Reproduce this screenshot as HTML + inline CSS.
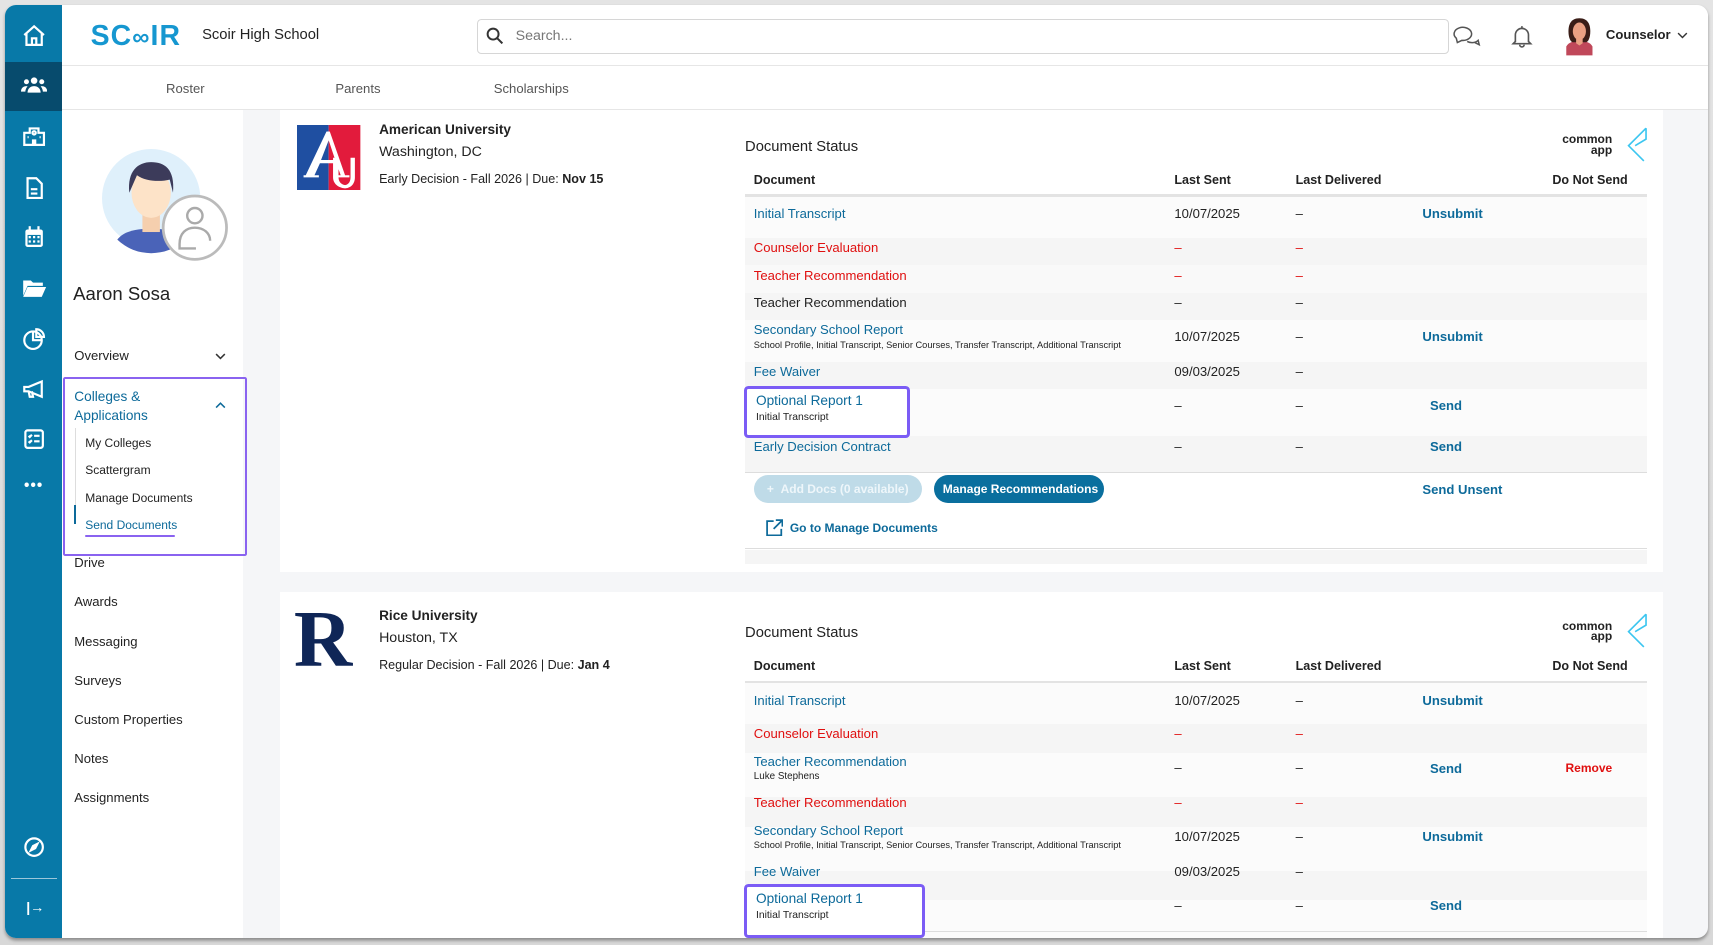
<!DOCTYPE html>
<html><head><meta charset="utf-8">
<style>
*{box-sizing:border-box;margin:0;padding:0}
html,body{width:1713px;height:945px;overflow:hidden;background:#dcdcdc}
#w{position:absolute;left:0;top:0;width:1568px;height:865px;zoom:1.09247;font-family:"Liberation Sans",sans-serif;color:#222;font-size:12px;background:linear-gradient(#e4e4e4,#d8d8d8)}
.a{position:absolute;white-space:nowrap}
#win{position:absolute;left:5px;top:5px;width:1558px;height:854px;background:#f5f6f8;border-radius:10px;overflow:hidden;box-shadow:0 2px 3px rgba(0,0,0,.35)}
.rail{left:0;top:0;width:52px;height:854px;background:#0879a8}
.ic{position:absolute;left:14px;width:24px;height:24px}
.blue{color:#0d6a9a}
.red{color:#e01010}
.card{background:#fff}
.row{position:absolute;left:0;width:826px}
.b{font-weight:bold}
.hl{position:absolute;border:3px solid #7b5cf5;border-radius:4px;background:#fff}
.tb .a:not(.nt){margin-top:-4px}
</style></head><body>
<div id="w">
<div id="win">
 <div class="a rail"></div>
 <div class="a" style="left:0;top:52px;width:52px;height:45px;background:#074b6d"></div>
 <svg class="ic" style="top:16px" viewBox="0 0 24 24" fill="none" stroke="#fff" stroke-width="2"><path d="M3 11L12 3l9 8M5 9v11h14V9M10 20v-6h4v6"/></svg>
 <svg class="ic" style="top:62px" viewBox="0 0 24 24" fill="#fff"><circle cx="12" cy="7" r="3"/><circle cx="5" cy="8" r="2.3"/><circle cx="19" cy="8" r="2.3"/><path d="M6 18c0-4 3-6 6-6s6 2 6 6zM0 17c0-3 2-5 5-5l1 .3C4.5 14 4 16 4 17zM24 17c0-3-2-5-5-5l-1 .3c1.5 1.700 2 3.7 2 4.7z"/></svg>
 <svg class="ic" style="top:108px" viewBox="0 0 24 24" fill="none" stroke="#fff" stroke-width="2"><path d="M3 20V9h5V5h8v4h5v11zM11 20v-4h2v4M6 13h1M17 13h1"/><circle cx="12" cy="9" r="1.5"/></svg>
 <svg class="ic" style="top:155px" viewBox="0 0 24 24" fill="none" stroke="#fff" stroke-width="2"><path d="M6 3h8l5 5v13H6zM9 13h6M9 17h6"/></svg>
 <svg class="ic" style="top:200px" viewBox="0 0 24 24" fill="#fff"><rect x="4" y="5" width="16" height="16" rx="2"/><rect x="7" y="2" width="2" height="4"/><rect x="15" y="2" width="2" height="4"/><path d="M6 10h12v9H6z" fill="#0879a8"/><path d="M7 11h2v2H7zM11 11h2v2h-2zM15 11h2v2h-2zM7 15h2v2H7zM11 15h2v2h-2zM15 15h2v2h-2z"/></svg>
 <svg class="ic" style="top:247px" viewBox="0 0 24 24" fill="#fff"><path d="M2 5h7l2 2h9v3H6l-4 9zM6 11h17l-4 9H2z"/></svg>
 <svg class="ic" style="top:293px" viewBox="0 0 24 24" fill="none" stroke="#fff" stroke-width="2"><circle cx="11" cy="13" r="8"/><path d="M11 5v8h8M14 3a7 7 0 0 1 7 7h-7z" /></svg>
 <svg class="ic" style="top:339px" viewBox="0 0 24 24" fill="none" stroke="#fff" stroke-width="2"><path d="M3 10h4l12-5v14L7 14H3zM7 14l1 5h3l-1-5"/></svg>
 <svg class="ic" style="top:385px" viewBox="0 0 24 24" fill="none" stroke="#fff" stroke-width="2"><rect x="4" y="4" width="16" height="16" rx="2"/><path d="M7 9l1 1 2-2M12 9h5M7 14l1 1 2-2M12 14h5"/></svg>
 <div class="a" style="left:17px;top:432px;color:#fff;font-size:14px;font-weight:bold;letter-spacing:1px">•••</div>
 <svg class="ic" style="top:758px" viewBox="0 0 24 24" fill="none" stroke="#fff" stroke-width="2"><circle cx="12" cy="12" r="8"/><path d="M15 9l-2 4-4 2 2-4z" fill="#fff"/></svg>
 <div class="a" style="left:5px;top:799px;width:42px;height:1px;background:#9cc7da"></div>
 <div class="a" style="left:19px;top:819px;color:#fff;font-size:13px;font-weight:bold">|→</div>

 <div class="a" style="left:52px;top:0;width:1506px;height:55px;background:#fff;border-bottom:1px solid #e6e6e6"></div>
 <div class="a" style="left:78px;top:13px;font-size:26px;font-weight:bold;color:#1697d0;letter-spacing:1px">SC<span style="font-size:22px">∞</span>IR</div>
 <div class="a" style="left:180px;top:20px;font-size:13.5px">Scoir High School</div>
 <div class="a" style="left:432px;top:12px;width:889px;height:32px;border:1px solid #d6d6d6;border-radius:4px;background:#fff"></div>
 <svg class="a" style="left:440px;top:20px" width="16" height="16" viewBox="0 0 16 16" fill="none" stroke="#333" stroke-width="1.8"><circle cx="6.5" cy="6.5" r="5"/><path d="M10 10l5 5"/></svg>
 <div class="a" style="left:467px;top:21px;font-size:13px;color:#777">Search...</div>
 <svg class="a" style="left:1325px;top:17px" width="26" height="22" viewBox="0 0 26 22" fill="none" stroke="#555" stroke-width="1.4"><path d="M3 13 a8 6 0 1 1 5 2l-4 2z"/><path d="M13 16a7 5 0 0 0 10 -1l1 4-4-2"/></svg>
 <svg class="a" style="left:1378px;top:17px" width="20" height="22" viewBox="0 0 20 22" fill="none" stroke="#555" stroke-width="1.5"><path d="M4 16V10a6 6 0 0 1 12 0v6l2 2H2zM8 19a2 2 0 0 0 4 0M10 2v2"/></svg>
 <svg class="a" style="left:1426px;top:10px" width="30" height="36" viewBox="0 0 30 36"><path d="M3 28c2-4 6-5 12-5s10 1 12 5v8H3z" fill="#c0485a"/><path d="M15 2c-8 0-10 6-10 12s2 10 4 10h12c2 0 4-4 4-10S23 2 15 2z" fill="#3a1d17"/><ellipse cx="15" cy="14" rx="6" ry="8" fill="#eaa083"/><path d="M12 21h6v4l-3 2-3-2z" fill="#eaa083"/></svg>
 <div class="a" style="left:1465px;top:20px;font-size:12px;font-weight:bold">Counselor</div>
 <svg class="a" style="left:1530px;top:24px" width="10" height="7" viewBox="0 0 10 7" fill="none" stroke="#333" stroke-width="1.3"><path d="M1 1l4 4 4-4"/></svg>

 <div class="a" style="left:52px;top:55px;width:1506px;height:41px;background:#fff;border-bottom:1px solid #e6e6e6"></div>
 <div class="a" style="left:147px;top:69px;color:#555">Roster</div>
 <div class="a" style="left:302px;top:69px;color:#555">Parents</div>
 <div class="a" style="left:447px;top:69px;color:#555">Scholarships</div>

 <div class="a" style="left:52px;top:96px;width:165px;height:758px;background:#fff"></div>
 <svg class="a" style="left:88px;top:131px" width="118" height="105" viewBox="0 0 118 105"><circle cx="45" cy="45" r="45" fill="#dff0fb"/><path d="M14 83c6-8 18-10 31-10s25 2 31 10a45 45 0 0 1-62 0z" fill="#4a63b8"/><rect x="37" y="58" width="16" height="18" fill="#f5cfae"/><ellipse cx="45" cy="40" rx="18" ry="23" fill="#fde3c8"/><path d="M25 40c-2-20 8-28 20-28s22 6 20 28l-3-12c-8 2-22 2-30-4z" fill="#3c3b5a"/><circle cx="85" cy="72" r="29" fill="#fff" stroke="#bbb" stroke-width="2.5"/><circle cx="85" cy="61" r="7" fill="none" stroke="#aaa" stroke-width="2.2"/><path d="M71 87c0-10 6-15 14-15s14 5 14 12" fill="none" stroke="#aaa" stroke-width="2.2"/><path d="M71 87v4h15" fill="none" stroke="#aaa" stroke-width="2.2"/></svg>
 <div class="a" style="left:62px;top:254px;font-size:17px">Aaron Sosa</div>
 <div class="a" style="left:63px;top:314px">Overview</div>
 <svg class="a" style="left:192px;top:318px" width="10" height="7" viewBox="0 0 10 7" fill="none" stroke="#333" stroke-width="1.4"><path d="M1 1l4 4 4-4"/></svg>
 <div class="a" style="left:53px;top:340px;width:168px;height:164px;border:2px solid #8a63f0;border-radius:2px"></div>
 <div class="a blue" style="left:63px;top:349px;font-size:12.5px;line-height:18px">Colleges &amp;<br>Applications</div>
 <svg class="a" style="left:192px;top:362px" width="10" height="7" viewBox="0 0 10 7" fill="none" stroke="#0d6a9a" stroke-width="1.4"><path d="M1 6l4-4 4 4"/></svg>
 <div class="a" style="left:64px;top:387px;width:1px;height:88px;background:#ddd"></div>
 <div class="a" style="left:63px;top:457px;width:2px;height:18px;background:#0d6a9a"></div>
 <div class="a" style="left:73px;top:394px;font-size:11px">My Colleges</div>
 <div class="a" style="left:73px;top:419px;font-size:11px">Scattergram</div>
 <div class="a" style="left:73px;top:444px;font-size:11px">Manage Documents</div>
 <div class="a blue" style="left:73px;top:469px;font-size:11px">Send Documents</div>
 <div class="a" style="left:73px;top:485px;width:82px;height:2px;background:#8a63f0;border-radius:1px"></div>
 <div class="a" style="left:63px;top:503px">Drive</div>
 <div class="a" style="left:63px;top:539px">Awards</div>
 <div class="a" style="left:63px;top:575px">Messaging</div>
 <div class="a" style="left:63px;top:611px">Surveys</div>
 <div class="a" style="left:63px;top:647px">Custom Properties</div>
 <div class="a" style="left:63px;top:682px">Notes</div>
 <div class="a" style="left:63px;top:718px">Assignments</div>

 <div class="a card" style="left:251px;top:96px;width:1266px;height:423px"></div>
 <svg class="a" style="left:267px;top:109px" width="58" height="60" viewBox="0 0 58 60"><rect width="29" height="60" fill="#1f4fa1"/><rect x="29" width="29" height="60" fill="#e21b3c"/><path d="M8 46L27 6h3l14 40h4v2H36v-2h4l-4-11H21l-5 11h4v2H6v-2z M22 32h13L29 14z" fill="#fff"/><path d="M33 30h5v18c0 5 4 7 6 7s5-2 5-7V30h4v18c0 7-5 10-9 10s-11-3-11-10z" fill="#fff"/></svg>
 <div class="a b" style="left:342px;top:107px;font-size:12.5px">American University</div>
 <div class="a" style="left:342px;top:127px;font-size:13px">Washington, DC</div>
 <div class="a" style="left:342px;top:152px;font-size:11.5px">Early Decision - Fall 2026 | Due: <b>Nov 15</b></div>

 <div class="a tb" style="left:677px;top:96px;width:826px;height:411px">
  <div class="a nt" style="left:0;top:26px;font-size:13.5px">Document Status</div>
  <div class="a b nt" style="left:748px;top:22px;font-size:11px;line-height:10px;text-align:right">common<br>app</div>
  <svg class="a" style="left:803px;top:18px" width="24" height="34" viewBox="0 0 24 34" fill="none" stroke="#3cc6f0" stroke-width="1.5"><path d="M22 2L6 18l14 14M22 2v10L12 18"/></svg>
  <div class="a b" style="left:8px;top:61px;font-size:11.5px">Document</div>
  <div class="a b" style="left:393px;top:61px;font-size:11.5px">Last Sent</div>
  <div class="a b" style="left:504px;top:61px;font-size:11.5px">Last Delivered</div>
  <div class="a b" style="left:739px;top:61px;font-size:11.5px">Do Not Send</div>
  <div class="a nt" style="left:0;top:77px;width:826px;height:2px;background:#e3e3e3"></div>
  <div class="row" style="top:79px;height:38px;background:#fbfbfb"></div>
  <div class="row" style="top:117px;height:25px;background:#f5f5f5"></div>
  <div class="row" style="top:142px;height:25px;background:#f9f9f9"></div>
  <div class="row" style="top:167px;height:25px;background:#f5f5f5"></div>
  <div class="row" style="top:192px;height:38px;background:#fbfbfb"></div>
  <div class="row" style="top:230px;height:25px;background:#f5f5f5"></div>
  <div class="row" style="top:255px;height:43px;background:#fbfbfb"></div>
  <div class="row" style="top:298px;height:33px;background:#f5f5f5"></div>
  <div class="a nt" style="left:0;top:331px;width:826px;height:1px;background:#ddd"></div>
  <div class="a nt" style="left:0;top:401px;width:826px;height:1px;background:#ddd"></div>
  <div class="a nt" style="left:0;top:402px;width:826px;height:13px;background:#f5f5f5"></div>

  <div class="a blue" style="left:8px;top:92px">Initial Transcript</div><div class="a" style="left:393px;top:92px">10/07/2025</div><div class="a" style="left:504px;top:92px">–</div><div class="a blue b" style="left:620px;top:92px">Unsubmit</div>
  <div class="a red" style="left:8px;top:123px">Counselor Evaluation</div><div class="a red" style="left:393px;top:123px">–</div><div class="a red" style="left:504px;top:123px">–</div>
  <div class="a red" style="left:8px;top:148px">Teacher Recommendation</div><div class="a red" style="left:393px;top:148px">–</div><div class="a red" style="left:504px;top:148px">–</div>
  <div class="a" style="left:8px;top:173px">Teacher Recommendation</div><div class="a" style="left:393px;top:173px">–</div><div class="a" style="left:504px;top:173px">–</div>
  <div class="a blue" style="left:8px;top:198px">Secondary School Report</div><div class="a" style="left:8px;top:214px;font-size:8.5px">School Profile, Initial Transcript, Senior Courses, Transfer Transcript, Additional Transcript</div><div class="a" style="left:393px;top:204px">10/07/2025</div><div class="a" style="left:504px;top:204px">–</div><div class="a blue b" style="left:620px;top:204px">Unsubmit</div>
  <div class="a blue" style="left:8px;top:236px">Fee Waiver</div><div class="a" style="left:393px;top:236px">09/03/2025</div><div class="a" style="left:504px;top:236px">–</div>
  <div class="hl" style="left:-1px;top:252px;width:152px;height:48px"></div>
  <div class="a blue" style="left:10px;top:263px;font-size:12.5px">Optional Report 1</div><div class="a" style="left:10px;top:280px;font-size:9.5px">Initial Transcript</div>
  <div class="a" style="left:393px;top:267px">–</div><div class="a" style="left:504px;top:267px">–</div><div class="a blue b" style="left:627px;top:267px">Send</div>
  <div class="a blue" style="left:8px;top:305px">Early Decision Contract</div><div class="a" style="left:393px;top:305px">–</div><div class="a" style="left:504px;top:305px">–</div><div class="a blue b" style="left:627px;top:305px">Send</div>
  <div class="a" style="left:8px;top:338px;width:154px;height:25px;border-radius:13px;background:#bfdbe8;color:#eef6fa;font-size:11px;font-weight:bold;padding:6px 0 0 12px">+&nbsp;&nbsp;Add Docs (0 available)</div>
  <div class="a" style="left:173px;top:338px;width:156px;height:25px;border-radius:13px;background:#0a6f9e;color:#fff;font-size:11px;font-weight:bold;padding:6px 0 0 8px">Manage Recommendations</div>
  <div class="a blue b" style="left:620px;top:344px">Send Unsent</div>
  <svg class="a nt" style="left:19px;top:374px" width="16" height="16" viewBox="0 0 16 16" fill="none" stroke="#0d6a9a" stroke-width="1.6"><path d="M7 2H1v13h13V9M9 1h6v6M15 1L7 9"/></svg>
  <div class="a blue b" style="left:41px;top:380px;font-size:11px">Go to Manage Documents</div>
 </div>

 <div class="a card" style="left:251px;top:537px;width:1266px;height:330px"></div>
 <div class="a" style="left:264px;top:546px;font-family:'Liberation Serif',serif;font-weight:bold;font-size:74px;line-height:70px;color:#0f2657">R</div>
 <div class="a b" style="left:342px;top:552px;font-size:12.5px">Rice University</div>
 <div class="a" style="left:342px;top:572px;font-size:13px">Houston, TX</div>
 <div class="a" style="left:342px;top:597px;font-size:11.5px">Regular Decision - Fall 2026 | Due: <b>Jan 4</b></div>
 <div class="a tb" style="left:677px;top:541px;width:826px;height:313px;overflow:visible">
  <div class="a nt" style="left:0;top:26px;font-size:13.5px">Document Status</div>
  <div class="a b nt" style="left:748px;top:22px;font-size:11px;line-height:10px;text-align:right">common<br>app</div>
  <svg class="a" style="left:803px;top:18px" width="24" height="34" viewBox="0 0 24 34" fill="none" stroke="#3cc6f0" stroke-width="1.5"><path d="M22 2L6 18l14 14M22 2v10L12 18"/></svg>
  <div class="a b" style="left:8px;top:61px;font-size:11.5px">Document</div>
  <div class="a b" style="left:393px;top:61px;font-size:11.5px">Last Sent</div>
  <div class="a b" style="left:504px;top:61px;font-size:11.5px">Last Delivered</div>
  <div class="a b" style="left:739px;top:61px;font-size:11.5px">Do Not Send</div>
  <div class="a nt" style="left:0;top:77px;width:826px;height:2px;background:#e3e3e3"></div>
  <div class="row" style="top:79px;height:38px;background:#fbfbfb"></div>
  <div class="row" style="top:117px;height:26px;background:#f5f5f5"></div>
  <div class="row" style="top:143px;height:41px;background:#fbfbfb"></div>
  <div class="row" style="top:184px;height:27px;background:#f5f5f5"></div>
  <div class="row" style="top:211px;height:40px;background:#fbfbfb"></div>
  <div class="row" style="top:251px;height:27px;background:#f5f5f5"></div>
  <div class="row" style="top:278px;height:40px;background:#fbfbfb"></div>
  <div class="a nt" style="left:0;top:306px;width:826px;height:1px;background:#ddd"></div>
  <div class="a blue" style="left:8px;top:92px">Initial Transcript</div><div class="a" style="left:393px;top:92px">10/07/2025</div><div class="a" style="left:504px;top:92px">–</div><div class="a blue b" style="left:620px;top:92px">Unsubmit</div>
  <div class="a red" style="left:8px;top:123px">Counselor Evaluation</div><div class="a red" style="left:393px;top:123px">–</div><div class="a red" style="left:504px;top:123px">–</div>
  <div class="a blue" style="left:8px;top:148px">Teacher Recommendation</div><div class="a" style="left:8px;top:164px;font-size:9px">Luke Stephens</div><div class="a" style="left:393px;top:154px">–</div><div class="a" style="left:504px;top:154px">–</div><div class="a blue b" style="left:627px;top:155px">Send</div><div class="a red b" style="left:751px;top:155px;font-size:11px">Remove</div>
  <div class="a red" style="left:8px;top:186px">Teacher Recommendation</div><div class="a red" style="left:393px;top:186px">–</div><div class="a red" style="left:504px;top:186px">–</div>
  <div class="a blue" style="left:8px;top:211px">Secondary School Report</div><div class="a" style="left:8px;top:227px;font-size:8.5px">School Profile, Initial Transcript, Senior Courses, Transfer Transcript, Additional Transcript</div><div class="a" style="left:393px;top:217px">10/07/2025</div><div class="a" style="left:504px;top:217px">–</div><div class="a blue b" style="left:620px;top:217px">Unsubmit</div>
  <div class="a blue" style="left:8px;top:249px">Fee Waiver</div><div class="a" style="left:393px;top:249px">09/03/2025</div><div class="a" style="left:504px;top:249px">–</div>
  <div class="hl" style="left:-1px;top:263px;width:166px;height:50px"></div>
  <div class="a blue" style="left:10px;top:274px;font-size:12.5px">Optional Report 1</div><div class="a" style="left:10px;top:291px;font-size:9.5px">Initial Transcript</div>
  <div class="a" style="left:393px;top:280px">–</div><div class="a" style="left:504px;top:280px">–</div><div class="a blue b" style="left:627px;top:280px">Send</div>
 </div>
</div>
</div>
</body></html>
